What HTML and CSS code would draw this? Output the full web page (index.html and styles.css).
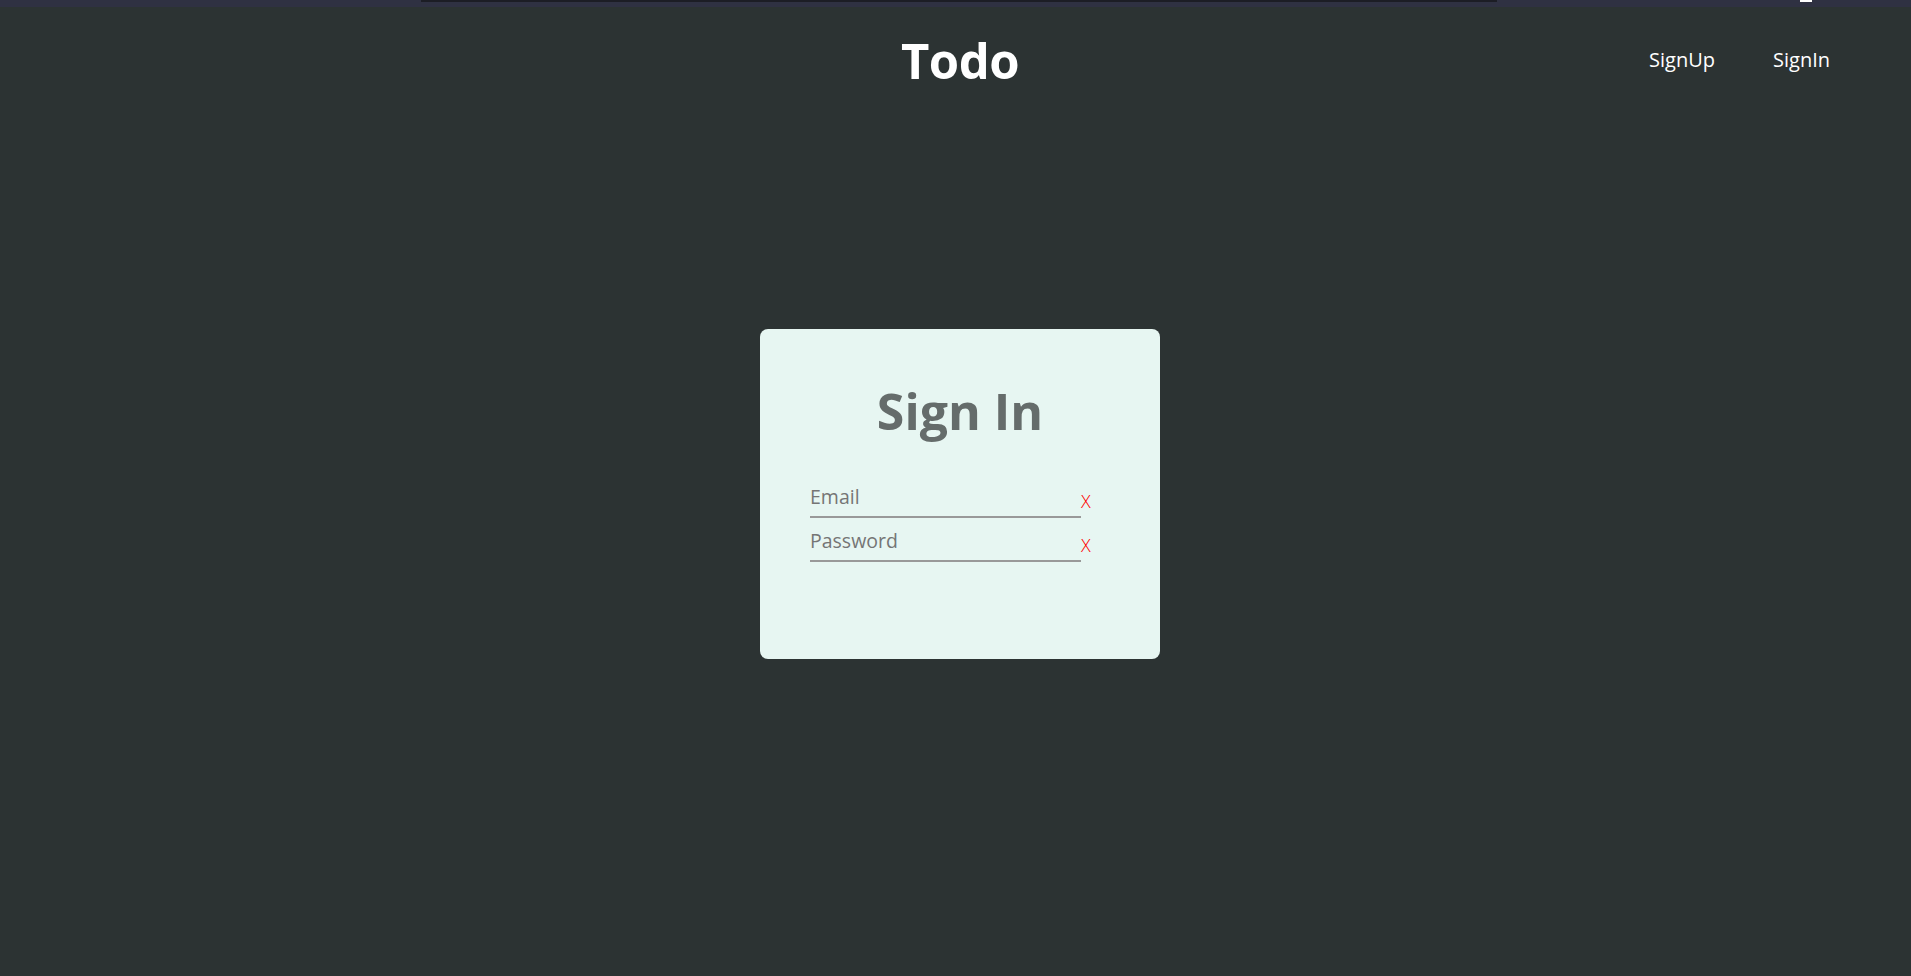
FILE: index.html
```html
<!DOCTYPE html>
<html lang="en">
<head>
<meta charset="utf-8">
<title>Todo</title>
<link rel="stylesheet" href="styles.css">
</head>
<body>
<div class="strip">
  <div class="strip-bar"></div>
  <div class="strip-dot"></div>
</div>
<header class="header">
  <div class="header-side"></div>
  <h1 class="brand">Todo</h1>
  <nav class="nav">
    <a class="nav-link" href="#">SignUp</a>
    <a class="nav-link" href="#">SignIn</a>
  </nav>
</header>
<main class="main">
  <form class="card">
    <h2 class="card-title">Sign In</h2>
    <div class="field">
      <input class="field-input" type="email" placeholder="Email">
      <span class="field-error">X</span>
    </div>
    <div class="field">
      <input class="field-input" type="password" placeholder="Password">
      <span class="field-error">X</span>
    </div>
  </form>
</main>
</body>
</html>
```
FILE: styles.css
```css
* { box-sizing: border-box; }
html, body { margin: 0; padding: 0; }
body {
  background: #2c3333;
  font-family: "Open Sans", "Noto Sans", sans-serif;
  height: 976px;
  overflow: hidden;
}
.strip {
  height: 7px;
  background: #2f3142;
  display: flex;
  align-items: flex-start;
}
.strip-bar {
  margin-left: 421px;
  width: 1076px;
  height: 2px;
  background: #1c1d25;
}
.strip-dot {
  margin-left: auto;
  margin-right: 99px;
  width: 12px;
  height: 2px;
  background: #ffffff;
}
.header {
  display: grid;
  grid-template-columns: 1fr auto 1fr;
  align-items: start;
  padding-left: 9px;
  height: 100px;
}
.brand {
  margin: 0;
  padding-top: 22px;
  font-size: 49px;
  font-weight: 700;
  color: #ffffff;
  line-height: 1.3;
  letter-spacing: -0.5px;
}
.nav {
  justify-self: end;
  display: flex;
  gap: 58px;
  padding-top: 38px;
  padding-right: 81px;
}
.nav-link {
  color: #ffffff;
  text-decoration: none;
  font-size: 20px;
  line-height: 1.5;
}
.main {
  display: flex;
  justify-content: center;
  padding-left: 9px;
  padding-top: 222px;
}
.card {
  width: 400px;
  height: 330px;
  background: #e7f6f2;
  border-radius: 8px;
  padding: 52px 0 0 50px;
}
.card-title {
  margin: 0 0 33px -50px;
  text-align: center;
  font-size: 50px;
  font-weight: 700;
  color: #656c6b;
  line-height: 1.2;
}
.field {
  display: flex;
  align-items: flex-end;
  height: 44px;
}
.field-input {
  width: 271px;
  height: 36px;
  border: none;
  border-bottom: 2px solid #999999;
  background: transparent;
  font-family: inherit;
  font-size: 19.5px;
  color: #333;
  padding: 0 0 6px 0;
  outline: none;
}
.field-input::placeholder { color: #757575; }
.field-error {
  color: #ff0000;
  font-size: 18px;
  font-weight: 300;
  line-height: normal;
  margin-bottom: 5px;
}
```
